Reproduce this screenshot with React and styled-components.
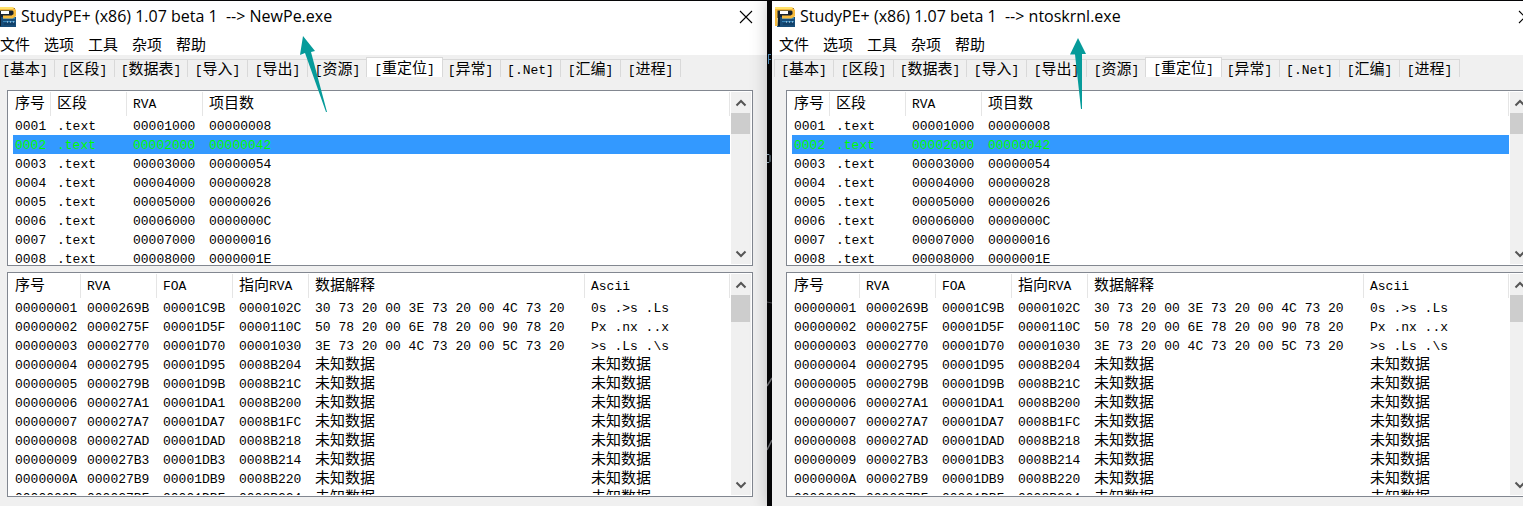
import React from "react";
import styled, { createGlobalStyle, css } from "styled-components";

const GlobalStyle = createGlobalStyle`
  * { box-sizing: border-box; }
  body { margin: 0; background: #060608; overflow: hidden; }
  button { border: 0; padding: 0; margin: 0; background: none; font: inherit; color: inherit; }
`;

const Desktop = styled.main`
  display: flex;
  height: 100vh;
  padding-top: 1px;
  overflow: hidden;
  background: #060608;
  color: #000;
`;

const Window = styled.section`
  position: relative;
  flex: 1 1 0;
  min-width: 0;
  display: flex;
  flex-direction: column;
  background: #f0f0f0;
  margin-left: ${(p) => (p.$side === "left" ? "-7px" : "0")};
  margin-right: ${(p) => (p.$side === "right" ? "-23px" : "0")};
  ${(p) => p.$side === "right" && css`box-shadow: 0 0 18px 2px rgba(0, 0, 0, 0.3);`}
`;

const Gap = styled.div`
  position: relative;
  z-index: 0;
  flex: 0 0 5px;
  overflow: hidden;
  background: #060608;
`;

const GapArt = styled.svg`
  display: block;
`;

const TitleBar = styled.header`
  display: flex;
  align-items: center;
  height: 32px;
  padding: 0 14px 0 3px;
  background: #fff;
`;

const Title = styled.h1`
  flex: 1;
  margin: 0 0 2px 5px;
  font: 400 16px/20px "Open Sans", "Noto Sans", sans-serif;
  white-space: pre;
`;

const CloseButton = styled.button`
  display: flex;
`;

const MenuBar = styled.nav`
  display: flex;
  gap: 14px;
  height: 22px;
  padding-left: 7px;
  background: #fff;
  font: 15px/22px "Noto Sans CJK SC", sans-serif;
`;

const MenuItem = styled.button`
  white-space: nowrap;
`;

const TabStrip = styled.div`
  display: flex;
  align-items: flex-end;
  height: 22px;
  margin: 0 0 13px 2px;
  font: 13px/18px "Liberation Mono", "Noto Sans CJK SC", monospace;
`;

const Tab = styled.button`
  width: ${(p) => (p.$wide ? 73 : 60)}px;
  height: 18px;
  padding-top: 3px;
  line-height: 15px;
  border-top: 1px solid #d9d9d9;
  border-right: 1px solid #d9d9d9;
  white-space: nowrap;
  &:first-child { border-left: 1px solid #d9d9d9; }
  ${(p) =>
    p.$active &&
    css`
      position: relative;
      width: 77px;
      height: 20px;
      margin: 0 -2px;
      border-left: 1px solid #d9d9d9;
      background: #fff;
    `}
`;

const Wide = styled.span`
  font: 15px/1px "Noto Sans CJK SC", sans-serif;
`;

const Panels = styled.div`
  flex: 1;
  min-height: 0;
  display: flex;
  flex-direction: column;
  gap: 6px;
  padding: 0 14px 9px;
`;

const Panel = styled.div`
  flex: ${(p) => p.$share} 1 0;
  min-height: 0;
  display: flex;
  padding: 1px;
  border: 1px solid #828790;
  background: #fff;
`;

const Viewport = styled.div`
  flex: 1;
  min-width: 0;
  overflow: hidden;
  padding: 0 1px 0 4px;
`;

const Table = styled.table`
  width: 100%;
  table-layout: fixed;
  border-collapse: separate;
  border-spacing: 0;
  font: 13px/17px "Liberation Mono", "Noto Sans CJK SC", monospace;
`;

const Col = styled.col`
  width: ${(p) => (p.$w ? `${p.$w}px` : "auto")};
`;

const HeadCell = styled.th`
  height: 24px;
  padding: 0 0 0 6px;
  border-right: 1px solid #e5e5e5;
  font-weight: 400;
  text-align: left;
  white-space: nowrap;
  &:first-child { padding-left: 2px; }
`;

const Cell = styled.td`
  height: 19px;
  padding: 2px 0 0 6px;
  white-space: pre;
  &:first-child { padding-left: 2px; }
`;

const Row = styled.tr`
  ${(p) => p.$selected && css`background: #3399ff; color: #00ff00;`}
`;

const ScrollBar = styled.div`
  flex: 0 0 20px;
  display: flex;
  flex-direction: column;
  background: #f0f0f0;
`;

const ScrollButton = styled.button`
  flex: 0 0 21px;
  display: flex;
  align-items: center;
  justify-content: center;
`;

const Track = styled.div`
  flex: 1;
`;

const Thumb = styled.div`
  width: 19px;
  height: ${(p) => p.$size}px;
  background: #cdcdcd;
`;

const Pointer = styled.svg`
  position: absolute;
  top: 35px;
  left: ${(p) => p.$left}px;
`;

const Mixed = ({ text }) =>
  text
    .split(/([\u4e00-\u9fff]+)/)
    .filter(Boolean)
    .map((part, i) => (/[\u4e00-\u9fff]/.test(part) ? <Wide key={i}>{part}</Wide> : part));

const AppIcon = () => (
  <svg width="20" height="20" viewBox="0 0 20 20" aria-hidden="true">
    <path d="M1 1h18v10H1z" fill="#18222d" />
    <path d="M3 10h17v10H2z" fill="#174c78" />
    <path d="M7 10h12v2H7zM7 14h12v1H7z" fill="#3584b9" />
    <path d="M1 19V2h16l2 2v4l-3 2H7" fill="none" stroke="#f7bb3d" strokeWidth="3" />
    <path d="M0 1h17" stroke="#ffe26a" strokeWidth="2" />
    <path d="M5 4h8v3H5z" fill="#fff" />
    <path d="M4 10v9" stroke="#0e202e" strokeWidth="2" />
    <path d="M11 15h1M14 15h1M17 15h1" stroke="#d8edf8" />
    <path d="M8 17h11" stroke="#0d3558" />
  </svg>
);

const Chevron = ({ down }) => (
  <svg width="12" height="8" viewBox="0 0 12 8" aria-hidden="true">
    <path d={down ? "M1.5 1.5L6 6l4.500-4.500" : "M1.500 6.500L6 2l4.500 4.500"} fill="none" stroke="#555" strokeWidth="2" />
  </svg>
);

const TABS = ["基本", "区段", "数据表", "导入", "导出", "资源", "重定位", "异常", ".Net", "汇编", "进程"];

const BLOCKS = {
  widths: [38, 76, 76, 0],
  head: ["序号", "区段", "RVA", "项目数"],
  rows: ["00000008", "00000042", "00000054", "00000028", "00000026", "0000000C", "00000016", "0000001E"].map(
    (count, i) => [`000${i + 1}`, ".text", `0000${i + 1}000`, count]
  ),
};

const UNKNOWN = "未知数据";
const ENTRIES = {
  widths: [68, 76, 76, 76, 276, 0],
  head: ["序号", "RVA", "FOA", "指向RVA", "数据解释", "Ascii"],
  rows: [
    ["00000001", "0000269B", "00001C9B", "0000102C", "30 73 20 00 3E 73 20 00 4C 73 20", "0s .>s .Ls"],
    ["00000002", "0000275F", "00001D5F", "0000110C", "50 78 20 00 6E 78 20 00 90 78 20", "Px .nx ..x"],
    ["00000003", "00002770", "00001D70", "00001030", "3E 73 20 00 4C 73 20 00 5C 73 20", ">s .Ls .\\s"],
    ["00000004", "00002795", "00001D95", "0008B204", UNKNOWN, UNKNOWN],
    ["00000005", "0000279B", "00001D9B", "0008B21C", UNKNOWN, UNKNOWN],
    ["00000006", "000027A1", "00001DA1", "0008B200", UNKNOWN, UNKNOWN],
    ["00000007", "000027A7", "00001DA7", "0008B1FC", UNKNOWN, UNKNOWN],
    ["00000008", "000027AD", "00001DAD", "0008B218", UNKNOWN, UNKNOWN],
    ["00000009", "000027B3", "00001DB3", "0008B214", UNKNOWN, UNKNOWN],
    ["0000000A", "000027B9", "00001DB9", "0008B220", UNKNOWN, UNKNOWN],
    ["0000000B", "000027BF", "00001DBF", "0008B224", UNKNOWN, UNKNOWN],
  ],
};

const ListPanel = ({ data, share, thumb, selected }) => (
  <Panel $share={share}>
    <Viewport>
      <Table>
        <colgroup>
          {data.widths.map((w, i) => <Col key={i} $w={w} />)}
        </colgroup>
        <thead>
          <tr>
            {data.head.map((h) => <HeadCell key={h} scope="col"><Mixed text={h} /></HeadCell>)}
          </tr>
        </thead>
        <tbody>
          {data.rows.map((row, r) => (
            <Row key={row[0]} $selected={r === selected}>
              {row.map((value, i) => <Cell key={i}><Mixed text={value} /></Cell>)}
            </Row>
          ))}
        </tbody>
      </Table>
    </Viewport>
    <ScrollBar>
      <ScrollButton aria-label="Scroll up"><Chevron /></ScrollButton>
      <Track><Thumb $size={thumb} /></Track>
      <ScrollButton aria-label="Scroll down"><Chevron down /></ScrollButton>
    </ScrollBar>
  </Panel>
);

const StudyWindow = ({ file, side, children }) => (
  <Window $side={side}>
    <TitleBar>
      <AppIcon />
      <Title>{`StudyPE+ (x86) 1.07 beta 1  --> ${file}`}</Title>
      <CloseButton aria-label="Close">
        <svg width="14" height="14" viewBox="0 0 14 14" aria-hidden="true">
          <path d="M1 1l12 12M13 1L1 13" stroke="#000" strokeWidth="1.100" />
        </svg>
      </CloseButton>
    </TitleBar>
    <MenuBar>
      {["文件", "选项", "工具", "杂项", "帮助"].map((m) => <MenuItem key={m}>{m}</MenuItem>)}
    </MenuBar>
    <TabStrip role="tablist">
      {TABS.map((t) => (
        <Tab key={t} role="tab" aria-selected={t === "重定位"} $wide={t === "数据表"} $active={t === "重定位"}>
          <Mixed text={`[${t}]`} />
        </Tab>
      ))}
    </TabStrip>
    <Panels>
      <ListPanel data={BLOCKS} share={176} thumb={21} selected={1} />
      <ListPanel data={ENTRIES} share={225} thumb={27} />
    </Panels>
    {children}
  </Window>
);

export default function App() {
  return (
    <>
      <GlobalStyle />
      <Desktop>
        <StudyWindow file="NewPe.exe" side="left">
          <Pointer $left={307} width="28" height="77" viewBox="0 0 28 77" aria-hidden="true">
            <path d="M3 0L0 19l5-2 21 59 1 0L11 16l4-1z" fill="#069b9a" />
          </Pointer>
        </StudyWindow>
        <Gap>
          <GapArt width="5" height="505" viewBox="0 0 5 505" aria-hidden="true">
            <path d="M1.500 53v10M1 53.500h3M1 58.500h3" stroke="#5f9fd0" fill="none" />
            <path d="M0 153.500h2l1 1v6l-1 1H0" stroke="#9db8c8" fill="none" />
            <path d="M0 301l5 1" stroke="#55565a" />
            <path d="M0 385l5-8M0 449l5-10" stroke="#77787c" strokeWidth="1.500" />
          </GapArt>
        </Gap>
        <StudyWindow file="ntoskrnl.exe" side="right">
          <Pointer $left={298} width="18" height="74" viewBox="0 0 18 74" aria-hidden="true">
            <path d="M8 2L0 18.500h5L11 73h1l0-55h4z" fill="#069b9a" />
          </Pointer>
        </StudyWindow>
      </Desktop>
    </>
  );
}
